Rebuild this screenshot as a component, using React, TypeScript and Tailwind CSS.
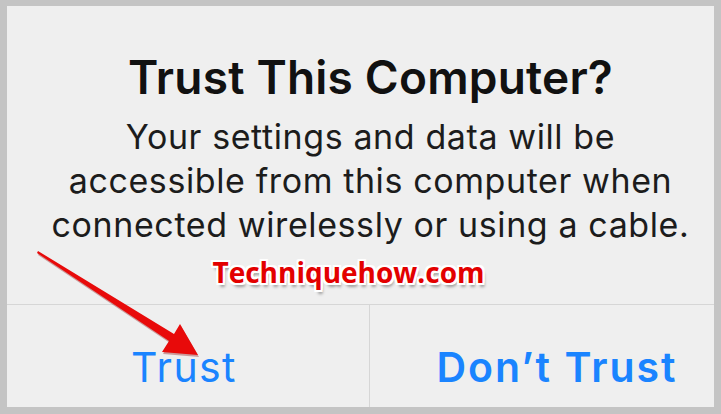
export default function App() {
  return (
    <div className="w-[721px] h-[414px] bg-[#c4c4c4] pt-[6px] pb-[7px] px-[7px] relative font-['Inter','Liberation_Sans',sans-serif]">
      <div className="w-full h-full bg-[#efefef] flex flex-col">
        {/* Message */}
        <div className="h-[299px] flex flex-col items-center pl-[20px] border-b border-[#d6d6d6]">
          <h1 className="mt-[42px] text-[46px] leading-[58px] font-semibold text-[#111] tracking-[0.2px]">
            Trust This Computer?
          </h1>
          <p className="mt-[9px] text-center text-[34px] leading-[44px] text-[#1c1c1c] tracking-[0.6px]">
            Your settings and data will be
            <br />
            accessible from this computer when
            <br />
            connected wirelessly or using a cable.
          </p>
          <div className="mt-[7px] ml-[-44px] text-[28px] leading-[36px] font-bold text-[#e30000] font-['Open_Sans',sans-serif] [text-shadow:2px_0_0_#fff,-2px_0_0_#fff,0_2px_0_#fff,0_-2px_0_#fff,2px_2px_0_#fff,-2px_-2px_0_#fff,2px_-2px_0_#fff,-2px_2px_0_#fff,2px_4px_3px_#9a9a9a]">
            Techniquehow.com
          </div>
        </div>

        {/* Buttons */}
        <div className="flex-1 flex">
          <button className="w-[363px] border-r border-[#d6d6d6] flex items-center justify-center pt-[22px] pr-[8px] text-[41px] leading-none text-[#1a84ff] tracking-[1.4px]">
            Trust
          </button>
          <button className="flex-1 flex items-center justify-center pt-[22px] pl-[30px] text-[41px] leading-none font-semibold text-[#1a84ff] tracking-[2px]">
            Don’t Trust
          </button>
        </div>
      </div>

      {/* Red arrow */}
      <svg className="absolute left-0 top-0" width="721" height="414" viewBox="0 0 721 414">
        <polygon
          points="38,251 174,334 180,324 198,355 162,352 169,341 37,253"
          fill="#8a0000"
          opacity="0.35"
          transform="translate(1,2)"
        />
        <polygon
          points="38,251 174,334 180,324 198,355 162,352 169,341 37,253"
          fill="#e80a0a"
        />
      </svg>
    </div>
  )
}
